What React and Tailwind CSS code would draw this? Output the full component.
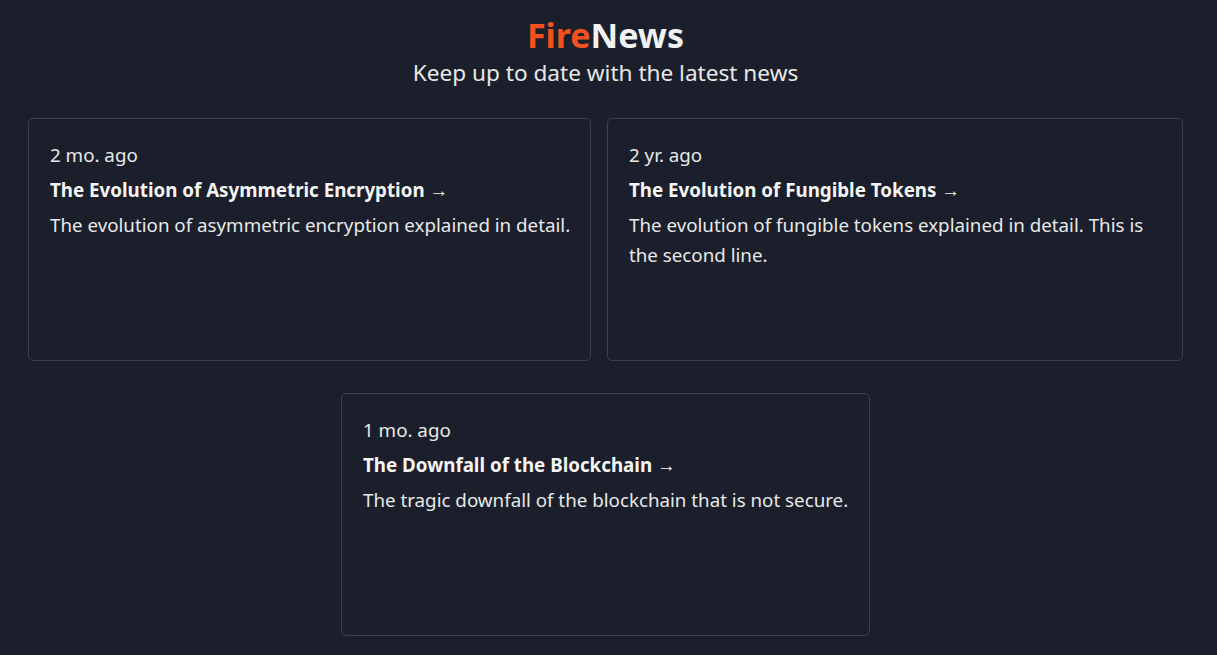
const posts = [
  {
    age: '2 mo. ago',
    title: 'The Evolution of Asymmetric Encryption',
    body: 'The evolution of asymmetric encryption explained in detail.',
    width: 'w-[563px]',
    nowrap: true,
  },
  {
    age: '2 yr. ago',
    title: 'The Evolution of Fungible Tokens',
    body: 'The evolution of fungible tokens explained in detail. This is the second line.',
    width: 'w-[576px]',
    nowrap: false,
  },
  {
    age: '1 mo. ago',
    title: 'The Downfall of the Blockchain',
    body: 'The tragic downfall of the blockchain that is not secure.',
    width: 'w-[529px]',
    nowrap: true,
  },
];

export default function App() {
  return (
    <div
      className="min-h-screen bg-[#1b1f2b] text-[#e8e8e8] pr-[6px]"
      style={{ fontFamily: '"Segoe UI", "Noto Sans", sans-serif' }}
    >
      {/* Header */}
      <header className="pt-[13px] text-center">
        <h1 className="text-[34px] font-bold leading-[45px]">
          <span className="text-[#f4511e]">Fire</span>
          <span className="text-[#f2f2f2]">News</span>
        </h1>
        <p className="text-[22.6px] leading-[30px]">Keep up to date with the latest news</p>
      </header>

      {/* Cards */}
      <div className="mt-[30px] flex justify-center gap-[16px]">
        <Card post={posts[0]} />
        <Card post={posts[1]} />
      </div>
      <div className="mt-[32px] flex justify-center">
        <Card post={posts[2]} />
      </div>
    </div>
  );
}

function Card({ post }) {
  return (
    <div className={`${post.width} h-[243px] rounded-[5px] border border-[#3b404b] px-[21px] pt-[21px] pb-5 text-[18.75px] leading-[30px]`}>
      <p className="mb-[5px]">{post.age}</p>
      <p className="mb-[5px] font-bold text-[#f5f5f5]">{post.title} →</p>
      <p className={post.nowrap ? 'whitespace-nowrap' : ''}>{post.body}</p>
    </div>
  );
}
